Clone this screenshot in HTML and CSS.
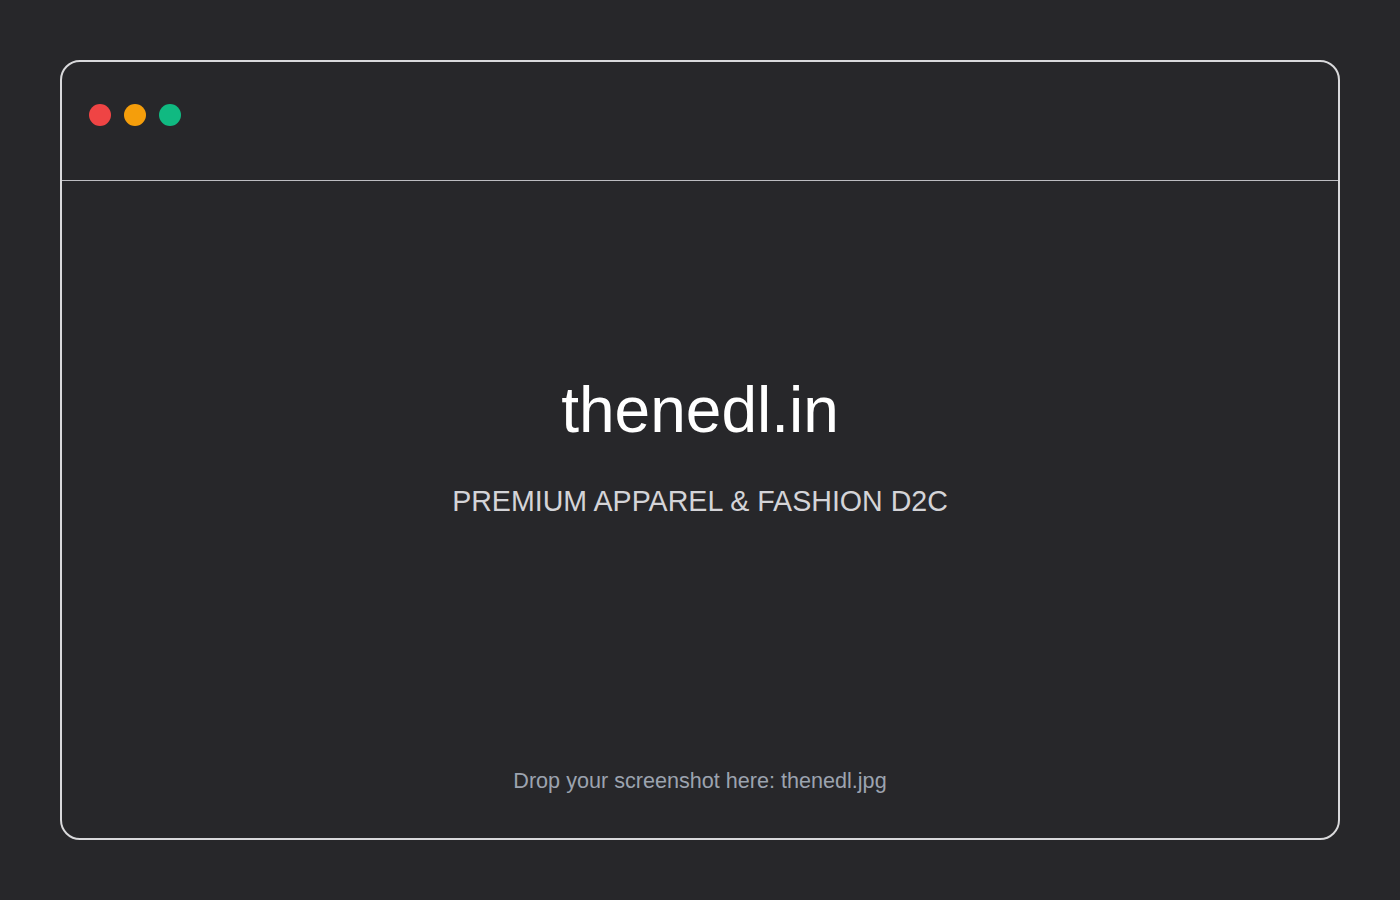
FILE: index.html
```html
<!DOCTYPE html>
<html lang="en">
<head>
<meta charset="utf-8">
<title>thenedl.in</title>
<link rel="stylesheet" href="styles.css">
</head>
<body>
<div class="frame">
  <div class="bar">
    <span class="dot red"></span>
    <span class="dot amber"></span>
    <span class="dot green"></span>
  </div>
  <div class="main">
    <div class="hero">
      <h1 class="title">thenedl.in</h1>
      <p class="subtitle">PREMIUM APPAREL &amp; FASHION D2C</p>
    </div>
    <p class="note">Drop your screenshot here: thenedl.jpg</p>
  </div>
</div>
</body>
</html>
```

FILE: styles.css
```css
html, body {
  margin: 0;
  padding: 0;
  background: #27272a;
}
body {
  padding: 60px;
  font-family: "Liberation Sans", Arial, sans-serif;
}
.frame {
  box-sizing: border-box;
  width: 1280px;
  height: 780px;
  border: 2px solid #d9d9db;
  border-radius: 20px;
  display: flex;
  flex-direction: column;
  overflow: hidden;
}
.bar {
  box-sizing: border-box;
  height: 119px;
  border-bottom: 1px solid #bdbdc2;
  display: flex;
  align-items: flex-start;
  gap: 13px;
  padding: 42px 0 0 27px;
}
.dot {
  width: 22px;
  height: 22px;
  border-radius: 50%;
  display: block;
}
.red { background: #ef4444; }
.amber { background: #f59e0b; }
.green { background: #10b981; }
.main {
  flex: 1;
  display: flex;
  flex-direction: column;
  align-items: center;
  padding: 197px 0 47px;
}
.hero {
  display: flex;
  flex-direction: column;
  align-items: center;
}
.title {
  margin: 0;
  font-size: 64px;
  line-height: 64px;
  font-weight: 400;
  color: #ffffff;
}
.subtitle {
  margin: 45px 0 0;
  font-size: 28.6px;
  line-height: 28px;
  color: #d4d4d8;
}
.note {
  margin: auto 0 0;
  font-size: 21.6px;
  line-height: 20px;
  color: #9ca3af;
}
```
